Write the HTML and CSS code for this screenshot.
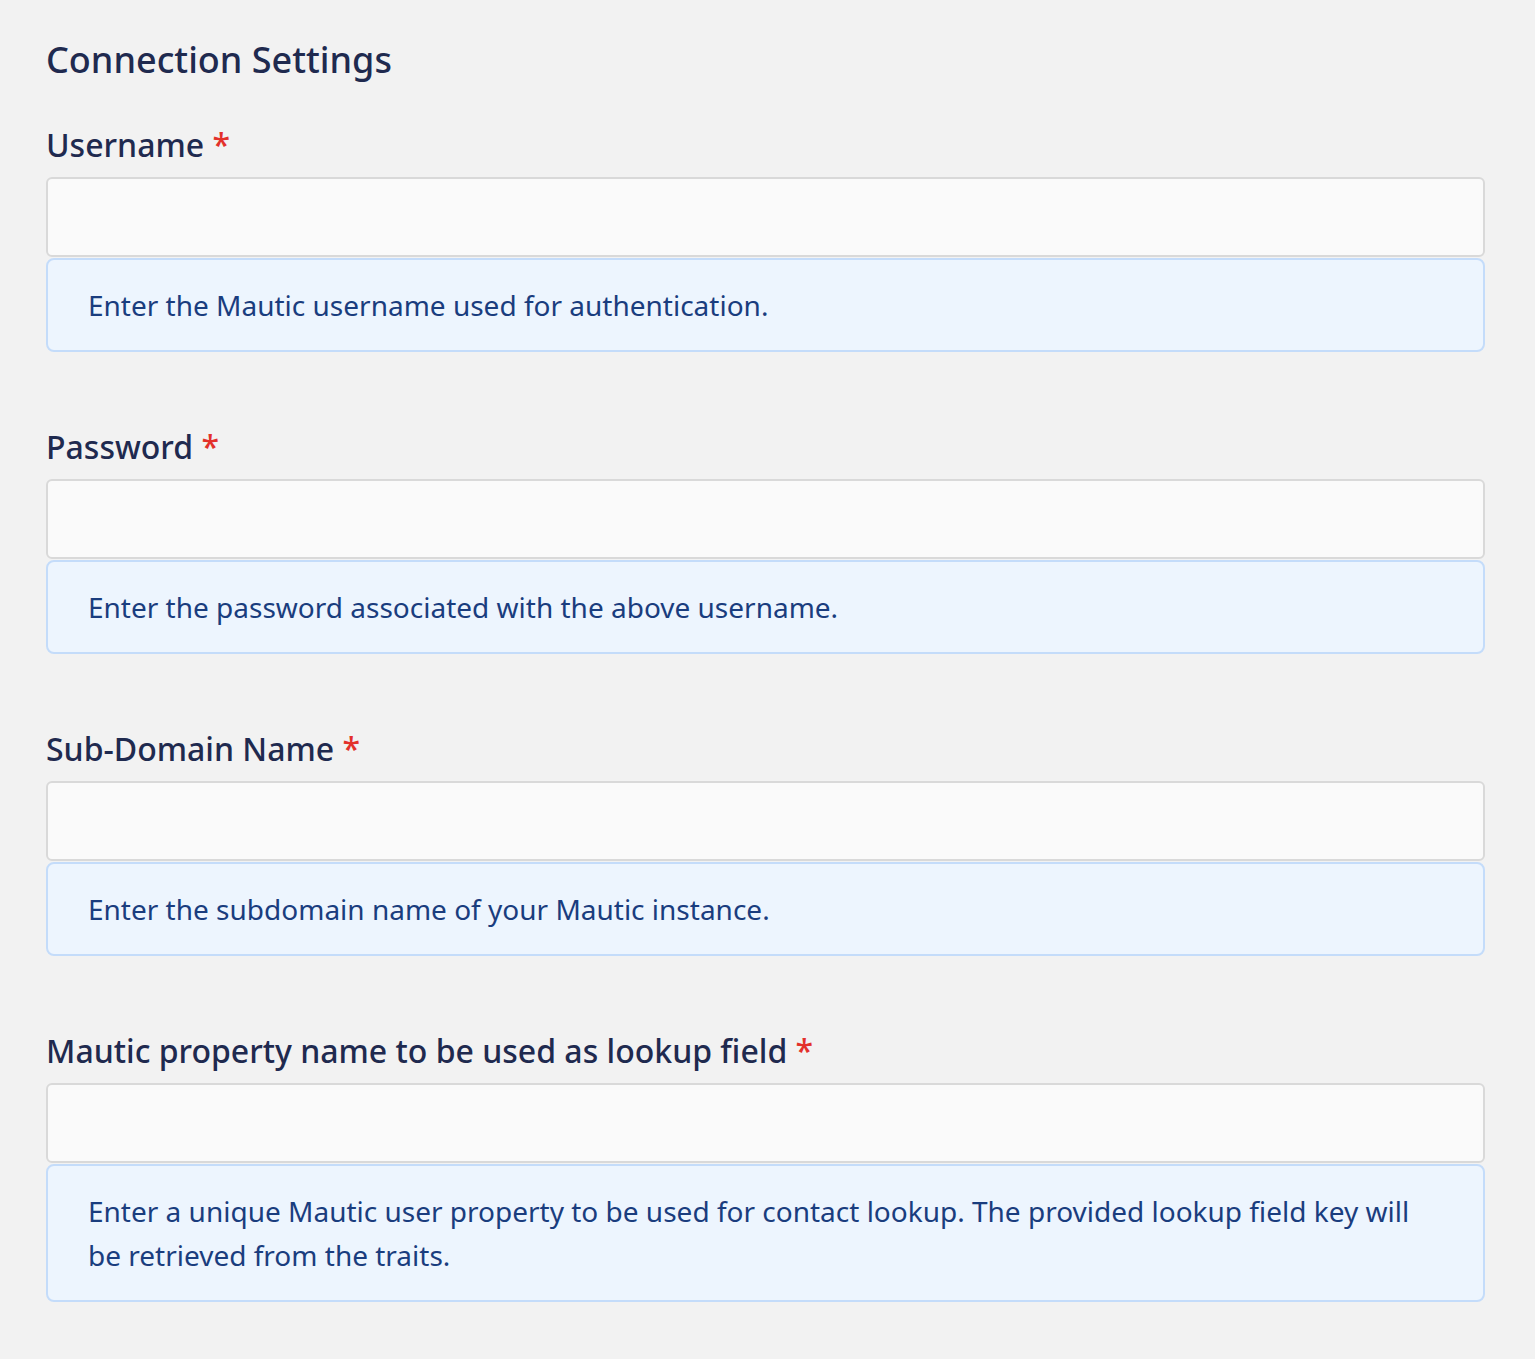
FILE: index.html
```html
<!DOCTYPE html>
<html>
<head>
<meta charset="utf-8">
<link rel="stylesheet" href="styles.css">
</head>
<body>
<div class="page">
  <h2 class="title">Connection Settings</h2>
  <div class="field">
    <label class="label">Username <span class="req">*</span></label>
    <div class="input"></div>
    <div class="help">Enter the Mautic username used for authentication.</div>
  </div>
  <div class="field">
    <label class="label">Password <span class="req">*</span></label>
    <div class="input"></div>
    <div class="help">Enter the password associated with the above username.</div>
  </div>
  <div class="field">
    <label class="label">Sub-Domain Name <span class="req">*</span></label>
    <div class="input"></div>
    <div class="help">Enter the subdomain name of your Mautic instance.</div>
  </div>
  <div class="field">
    <label class="label">Mautic property name to be used as lookup field <span class="req">*</span></label>
    <div class="input"></div>
    <div class="help">Enter a unique Mautic user property to be used for contact lookup. The provided lookup field key will be retrieved from the traits.</div>
  </div>
</div>
</body>
</html>
```

FILE: styles.css
```css
html, body {
  margin: 0;
  padding: 0;
  background: #f2f2f2;
}
body {
  font-family: "Noto Sans", "Open Sans", sans-serif;
  color: #1f2a4f;
}
.page {
  padding: 35px 50px 56px 46px;
  display: flex;
  flex-direction: column;
}
.title {
  margin: 0 0 38px 0;
  font-size: 36px;
  font-weight: 500;
  line-height: 50px;
  color: #1f2a4f;
}
.field {
  display: flex;
  flex-direction: column;
  margin-bottom: 73px;
}
.field:last-child {
  margin-bottom: 0;
}
.label {
  font-size: 32px;
  font-weight: 500;
  line-height: 44px;
  margin-bottom: 10px;
  color: #1f2a4f;
}
.req {
  color: #e3312b;
}
.input {
  height: 76px;
  background: #fafafa;
  border: 2px solid #d9d9d9;
  border-radius: 6px;
}
.help {
  margin-top: 1px;
  background: #edf5fe;
  border: 2px solid #c4dcfa;
  border-radius: 8px;
  padding: 23px 40px;
  font-size: 28px;
  line-height: 44px;
  color: #1a3d7e;
}
```
